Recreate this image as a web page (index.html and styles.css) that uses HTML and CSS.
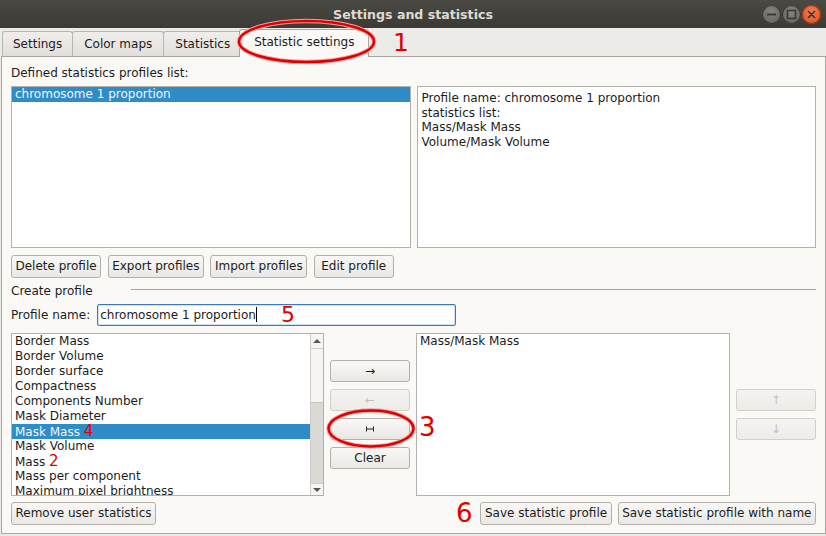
FILE: index.html
```html
<!DOCTYPE html>
<html>
<head>
<meta charset="utf-8">
<link rel="stylesheet" href="styles.css">
</head>
<body>
<div class="window">
  <div class="titlebar">
    <div class="title">Settings and statistics</div>
    <div class="wm-buttons">
      <span class="wm wm-gray"><svg width="19" height="19" viewBox="0 0 19 19"><rect x="5" y="8.5" width="9" height="2" fill="#3a3935"/></svg></span>
      <span class="wm wm-gray"><svg width="19" height="19" viewBox="0 0 19 19"><rect x="5.5" y="5.5" width="8" height="8" fill="none" stroke="#3a3935" stroke-width="1.6"/></svg></span>
      <span class="wm wm-close"><svg width="19" height="19" viewBox="0 0 19 19"><path d="M6.5 6.5 L12.5 12.5 M12.5 6.5 L6.5 12.5" stroke="#3a3935" stroke-width="1.7" stroke-linecap="round"/></svg></span>
    </div>
  </div>

  <div class="tabbar">
    <div class="tab first">Settings</div>
    <div class="tab">Color maps</div>
    <div class="tab">Statistics</div>
    <div class="tab active">Statistic settings</div>
  </div>

  <div class="pane">
    <div class="label">Defined statistics profiles list:</div>

    <div class="top-row">
      <div class="listbox profiles">
        <div class="item selected">chromosome 1 proportion</div>
      </div>
      <div class="listbox textbox">
        <div>Profile name: chromosome 1 proportion</div>
        <div>statistics list:</div>
        <div>Mass/Mask Mass</div>
        <div>Volume/Mask Volume</div>
      </div>
    </div>

    <div class="btn-row">
      <button class="btn">Delete profile</button>
      <button class="btn">Export profiles</button>
      <button class="btn">Import profiles</button>
      <button class="btn">Edit profile</button>
    </div>

    <div class="group-title">
      <span>Create profile</span>
      <span class="rule"></span>
    </div>

    <div class="name-row">
      <span class="name-label">Profile name:</span>
      <div class="input">chromosome 1 proportion<span class="caret"></span></div>
    </div>

    <div class="lists-row">
      <div class="listbox stats">
        <div class="items">
          <div class="item">Border Mass</div>
          <div class="item">Border Volume</div>
          <div class="item">Border surface</div>
          <div class="item">Compactness</div>
          <div class="item">Components Number</div>
          <div class="item">Mask Diameter</div>
          <div class="item selected">Mask Mass <span class="mark">4</span></div>
          <div class="item">Mask Volume</div>
          <div class="item">Mass <span class="mark">2</span></div>
          <div class="item">Mass per component</div>
          <div class="item">Maximum pixel brightness</div>
        </div>
        <div class="scrollbar">
          <div class="sb-btn sb-up"><span class="tri-up"></span></div>
          <div class="sb-handle"></div>
          <div class="sb-track"></div>
          <div class="sb-btn sb-down"><span class="tri-down"></span></div>
        </div>
      </div>

      <div class="mid-col">
        <button class="btn small">→</button>
        <button class="btn small disabled">←</button>
        <button class="btn small"><svg width="8" height="6" viewBox="0 0 8 6"><path d="M0.5 0.5 V5.5 M7.5 0.5 V5.5 M0.5 3 H7.5" stroke="#222" stroke-width="1" fill="none"/></svg></button>
        <button class="btn small">Clear</button>
      </div>

      <div class="listbox chosen">
        <div class="item">Mass/Mask Mass</div>
      </div>

      <div class="side-col">
        <button class="btn small disabled">↑</button>
        <button class="btn small disabled">↓</button>
      </div>
    </div>

    <div class="bottom-row">
      <button class="btn">Remove user statistics</button>
      <span class="spacer"></span>
      <button class="btn">Save statistic profile</button>
      <button class="btn">Save statistic profile with name</button>
    </div>
  </div>

  <svg class="annot-svg" width="826" height="536" viewBox="0 0 826 536">
    <ellipse cx="306.5" cy="41.5" rx="67.5" ry="20.5" fill="none" stroke="#f3a0a0" stroke-width="4.5"/>
    <ellipse cx="306.5" cy="41.5" rx="67.5" ry="20.5" fill="none" stroke="#dd0000" stroke-width="2.4"/>
    <ellipse cx="371" cy="428.5" rx="42.5" ry="18" fill="none" stroke="#f3a0a0" stroke-width="4.5"/>
    <ellipse cx="371" cy="428.5" rx="42.5" ry="18" fill="none" stroke="#dd0000" stroke-width="2.4"/>
  </svg>
  <span class="num n1">1</span>
  <span class="num n3">3</span>
  <span class="num n5">5</span>
  <span class="num n6">6</span>
</div>
</body>
</html>
```

FILE: styles.css
```css
* { box-sizing: border-box; }

body {
  margin: 0;
  width: 826px;
  height: 536px;
  overflow: hidden;
  font-family: "DejaVu Sans", sans-serif;
  font-size: 12px;
  color: #1c1c1c;
}

.window {
  position: relative;
  width: 826px;
  height: 536px;
  background: #edebe7;
  display: flex;
  flex-direction: column;
}

/* title bar */
.titlebar {
  height: 28px;
  flex: none;
  background: linear-gradient(#4a4944, #3b3a36);
  display: grid;
  grid-template-columns: 1fr auto 1fr;
  align-items: center;
}
.title {
  grid-column: 2;
  font-weight: bold;
  font-size: 12.6px;
  color: #dfdbd2;
}
.wm-buttons {
  grid-column: 3;
  justify-self: end;
  display: flex;
  gap: 1px;
  margin-right: 5px;
}
.wm {
  width: 19px;
  height: 19px;
  border-radius: 50%;
  display: block;
}
.wm svg { display: block; }
.wm-gray {
  background: radial-gradient(circle at 50% 35%, #85847e, #5d5c57);
  box-shadow: inset 0 0 0 1px #35342f;
}
.wm-close {
  background: radial-gradient(circle at 50% 35%, #f47b4f, #df4a1f);
  box-shadow: inset 0 0 0 1px #8e3515;
}

/* tabs */
.tabbar {
  height: 28px;
  flex: none;
  display: flex;
  align-items: flex-end;
  padding-left: 2px;
}
.tab {
  height: 25px;
  border: 1px solid #b9b5af;
  border-bottom: none;
  border-radius: 3px 3px 0 0;
  padding: 1px 11px 0;
  line-height: 23px;
  background: linear-gradient(#f0eeeb, #e2dfdb);
  margin-left: -1px;
  white-space: nowrap;
}
.tab.first { margin-left: 0; padding: 1px 10px 0; }
.tab.active {
  height: 28px;
  background: #fbf9f6;
  border-color: #aaa7a2;
  margin: 0 -2px -1px -3px;
  padding: 1px 14px 0;
  position: relative;
  z-index: 1;
}

/* pane */
.pane {
  flex: 1;
  margin: 0 0 2px 1px;
  border: 1px solid #aaa7a2;
  background: #fbf9f6;
  padding: 8px 9px 7px 9px;
  display: flex;
  flex-direction: column;
}

.label { line-height: 16px; margin-bottom: 5px; }

.top-row {
  display: grid;
  grid-template-columns: 1fr 1fr;
  gap: 6px;
  height: 162px;
  flex: none;
}

.listbox {
  background: #fff;
  border: 1px solid #b4b0aa;
  overflow: hidden;
  min-width: 0;
}
.textbox {
  padding: 4px 4px;
  line-height: 14.7px;
}

.item {
  line-height: 15px;
  height: 15px;
  padding-left: 3px;
  white-space: nowrap;
}
.item.selected {
  background: #308cc6;
  color: #f2f6fa;
}
.mark {
  color: #e00000;
  font-size: 15px;
  line-height: 1;
}

/* buttons */
.btn {
  font: inherit;
  color: #1c1c1c;
  height: 23px;
  min-width: 80px;
  border: 1px solid #b3afa9;
  border-radius: 3px;
  background: linear-gradient(#f9f8f6, #eae8e5);
  padding: 0 3.5px;
  line-height: 21px;
  white-space: nowrap;
  display: flex;
  align-items: center;
  justify-content: center;
}
.btn.small {
  height: 22px;
  line-height: 20px;
  width: 80px;
}
.btn.disabled {
  color: #c4c1bc;
  border-color: #d2cec8;
  background: linear-gradient(#f4f3f1, #eeece9);
}

.btn-row {
  display: flex;
  gap: 6.5px;
  margin-top: 7px;
  flex: none;
}

.group-title {
  display: flex;
  line-height: 16px;
  margin-top: 5px;
  flex: none;
}
.rule {
  flex: 1;
  height: 1px;
  background: #a6a39e;
  margin: 6px 0 0 38px;
}

.name-row {
  display: flex;
  align-items: center;
  margin-top: 5px;
  height: 22px;
  flex: none;
}
.name-label { line-height: 16px; }
.input {
  margin-left: 7px;
  width: 359px;
  height: 22px;
  border: 1px solid #3d7ab5;
  border-radius: 2px;
  background: #fff;
  padding-left: 2px;
  line-height: 20px;
  box-shadow: inset 0 0 0 1px #cfe0f0;
  white-space: nowrap;
}
.caret {
  display: inline-block;
  width: 1px;
  height: 15px;
  background: #000;
  vertical-align: -3px;
}

/* lists row */
.lists-row {
  display: flex;
  margin-top: 7px;
  height: 163px;
  flex: none;
}
.stats {
  width: 313px;
  display: flex;
}
.stats .items { flex: 1; overflow: hidden; }
.scrollbar {
  width: 13px;
  border-left: 1px solid #cfccc7;
  background: #dcdad6;
  display: flex;
  flex-direction: column;
}
.sb-btn {
  background: #f6f5f3;
  display: flex;
  align-items: center;
  justify-content: center;
}
.sb-up { height: 15px; border-bottom: 1px solid #cfccc7; }
.sb-down { height: 12px; border-top: 1px solid #cfccc7; }
.sb-handle {
  height: 54px;
  background: #f6f5f3;
  border-bottom: 1px solid #c9c6c1;
}
.sb-track { flex: 1; }
.tri-up {
  width: 0; height: 0;
  border-left: 4px solid transparent;
  border-right: 4px solid transparent;
  border-bottom: 4px solid #5a5955;
}
.tri-down {
  width: 0; height: 0;
  border-left: 4px solid transparent;
  border-right: 4px solid transparent;
  border-top: 4px solid #5a5955;
}

.mid-col, .side-col {
  width: 80px;
  display: flex;
  flex-direction: column;
  justify-content: center;
  gap: 7px;
}
.mid-col { margin-left: 6px; }
.side-col { margin-left: 6px; }
.chosen { flex: 1; margin-left: 6px; }

.bottom-row {
  display: flex;
  gap: 6px;
  margin-top: 6px;
  flex: none;
}
.spacer { flex: 1; }

/* annotations */
.annot-svg {
  position: absolute;
  left: 0;
  top: 0;
  pointer-events: none;
  z-index: 5;
}
.num {
  position: absolute;
  color: #e00000;
  font-family: "DejaVu Sans", sans-serif;
  line-height: 1;
  z-index: 6;
}
.n1 { left: 393px; top: 30px; font-size: 25px; }
.n3 { left: 419px; top: 414px; font-size: 26px; }
.n5 { left: 281px; top: 304px; font-size: 22px; }
.n6 { left: 456px; top: 500px; font-size: 26px; }
```
